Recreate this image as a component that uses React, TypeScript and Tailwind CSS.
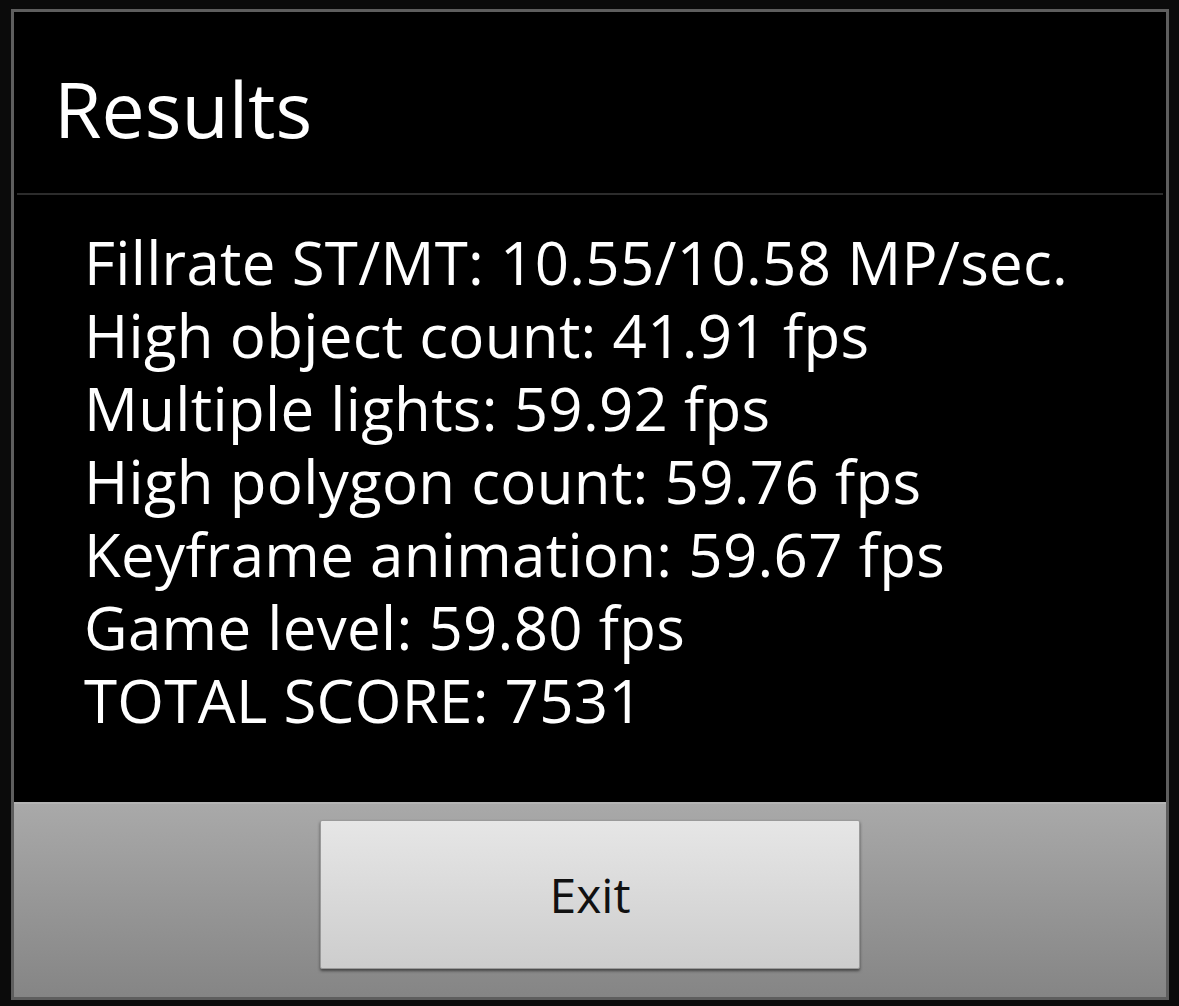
const results = [
  "Fillrate ST/MT: 10.55/10.58 MP/sec.",
  "High object count: 41.91 fps",
  "Multiple lights: 59.92 fps",
  "High polygon count: 59.76 fps",
  "Keyframe animation: 59.67 fps",
  "Game level: 59.80 fps",
  "TOTAL SCORE: 7531",
];

export default function App() {
  return (
    <div className="h-[1006px] w-[1179px] bg-[#0b0b0b] pl-[11px] pt-[9px] font-['Open_Sans',sans-serif]">
      <div className="flex h-[991px] w-[1158px] flex-col border-[3px] border-[#5e5e5e] bg-black">
        <div className="flex h-[181px] items-center pl-[40px] pt-[12px]">
          <h1 className="text-[77px] leading-none text-white">Results</h1>
        </div>
        <div className="mx-[3px] h-[2px] bg-[#2c2c2c]" />
        <div className="flex-1 pl-[70px] pt-[31px]">
          {results.map((line) => (
            <p key={line} className="text-[60px] leading-[73px] tracking-[0.3px] text-white">
              {line}
            </p>
          ))}
        </div>
        <div className="flex h-[195px] flex-col items-center border-t-2 border-[#b4b4b4] bg-gradient-to-b from-[#a9a9a9] to-[#858585] pt-[16px]">
          <button className="flex h-[149px] w-[540px] items-center justify-center rounded-[2px] border border-[#9a9a9a] bg-gradient-to-b from-[#e6e6e6] to-[#cdcdcd] text-[48px] text-[#111] shadow-[0_2px_3px_rgba(0,0,0,0.5)]">
            Exit
          </button>
        </div>
      </div>
    </div>
  );
}
